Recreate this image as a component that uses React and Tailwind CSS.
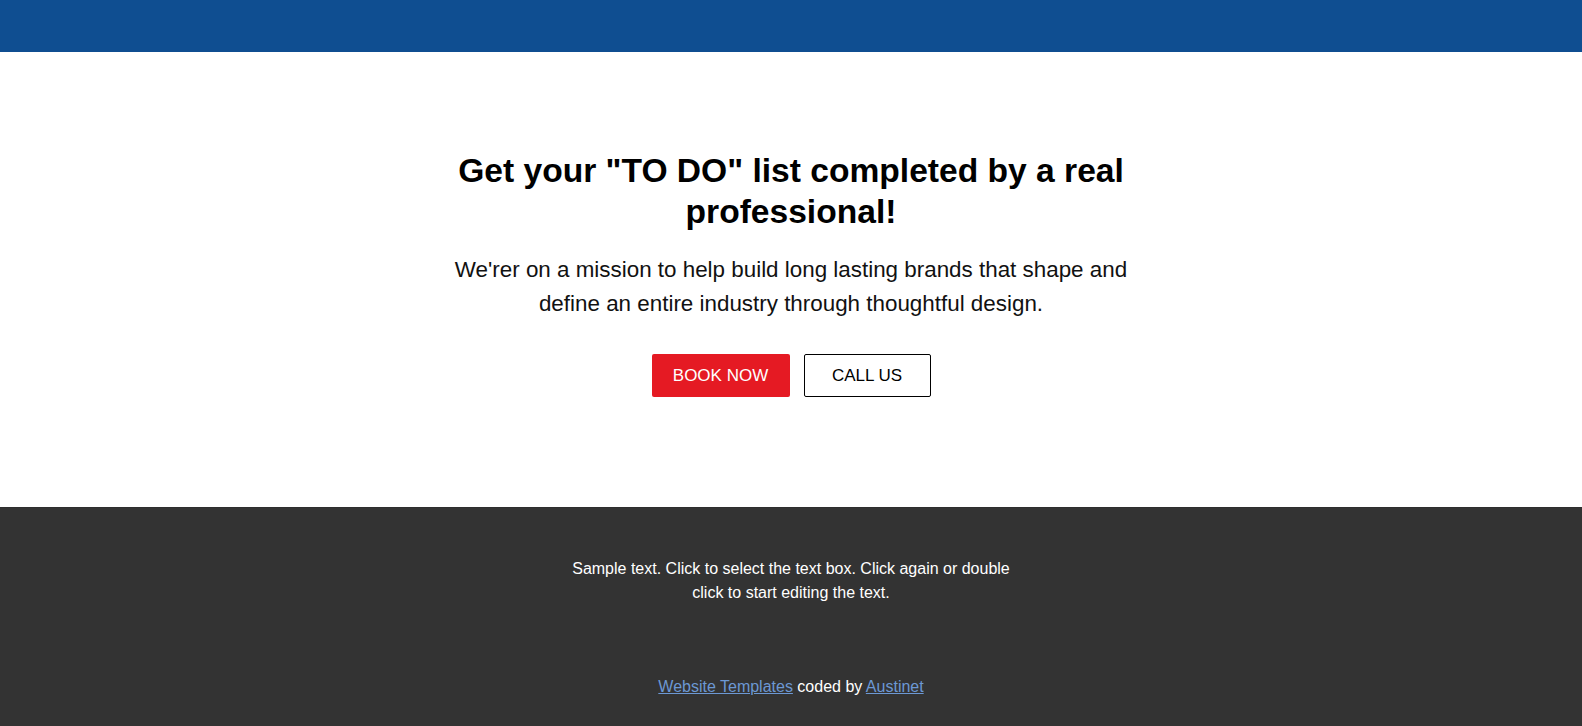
import React from "react";

const App = () => {
  return (
    <div className="min-h-[726px] flex flex-col bg-white font-['Liberation_Sans',Arial,sans-serif]">
      {/* header bar */}
      <header className="h-[52px] bg-[#0f4e91]" />

      {/* hero */}
      <section className="flex-1 pt-[98px] pb-[110px]">
        <div className="max-w-[700px] mx-auto text-center">
          <h1 className="text-[33.6px] leading-[41px] font-bold text-black">
            Get your "TO DO" list completed by a real professional!
          </h1>
          <p className="mt-[21px] text-[22.4px] leading-[34px] text-[#111]">
            We'rer on a mission to help build long lasting brands that shape and define an entire industry through thoughtful design.
          </p>
          <div className="mt-[33px] flex justify-center gap-[14px]">
            <a href="#" className="w-[138px] h-[43px] flex items-center justify-center rounded-[2px] bg-[#e51a23] text-white text-[17px]">
              BOOK NOW
            </a>
            <a href="#" className="w-[127px] h-[43px] flex items-center justify-center rounded-[2px] border border-black text-black text-[17px]">
              CALL US
            </a>
          </div>
        </div>
      </section>

      {/* footer */}
      <footer className="bg-[#333333] border-t border-[#2e2e2e] pt-[49px] pb-[27px] text-white text-center text-[16px] leading-[24px]">
        <p className="max-w-[440px] mx-auto">
          Sample text. Click to select the text box. Click again or double click to start editing the text.
        </p>
        <p className="mt-[70px]">
          <a href="#" className="underline text-[#6c98d4]">Website Templates</a> coded by{" "}
          <a href="#" className="underline text-[#6c98d4]">Austinet</a>
        </p>
      </footer>
    </div>
  );
};

export default App;
